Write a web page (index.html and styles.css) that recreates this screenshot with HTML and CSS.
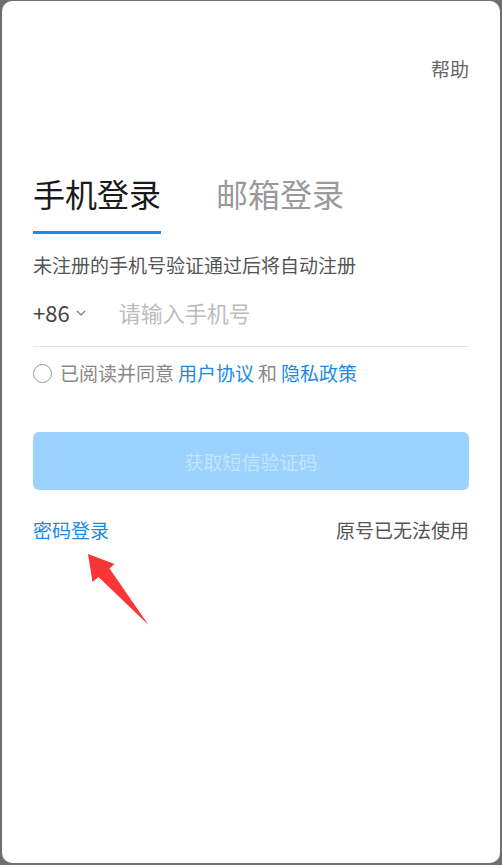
FILE: index.html
```html
<!DOCTYPE html>
<html>
<head>
    <meta charset="utf-8">
    <link rel="stylesheet" href="styles.css">
</head>
<body>
    <div class="card">
        <div class="top-bar">
            <span class="help">帮助</span>
        </div>

        <div class="tabs">
            <div class="tab active">手机登录</div>
            <div class="tab">邮箱登录</div>
        </div>

        <p class="tip">未注册的手机号验证通过后将自动注册</p>

        <div class="phone-row">
            <span class="area">+86</span>
            <svg class="chevron" width="10" height="6" viewBox="0 0 10 6">
                <path d="M1 1 L5 5 L9 1" fill="none" stroke="#777" stroke-width="1.2"/>
            </svg>
            <span class="placeholder">请输入手机号</span>
        </div>

        <div class="agree-row">
            <span class="radio"></span>
            <span>已阅读并同意</span>
            <a class="link">用户协议</a>
            <span>和</span>
            <a class="link">隐私政策</a>
        </div>

        <button class="submit">获取短信验证码</button>

        <div class="bottom-row">
            <a class="link">密码登录</a>
            <span class="lost">原号已无法使用</span>
        </div>

        <!-- annotation arrow -->
        <svg class="arrow" width="80" height="90" viewBox="80 545 80 90">
            <polygon points="88,554 114.5,564 109.5,568.5 148.5,625 98.5,577 92.5,582" fill="#fb3434"/>
        </svg>
    </div>
</body>
</html>
```

FILE: styles.css
```css
* {
    box-sizing: border-box;
}

html, body {
    height: 100%;
}

body {
    margin: 0;
    padding: 1px 2px 2px 2px;
    background-color: #6f6f6f;
    font-family: "Noto Sans CJK SC", "Noto Sans", sans-serif;
}

.card {
    position: relative;
    height: 100%;
    background: #fff;
    border-radius: 10px;
    padding: 0 31px;
}

.top-bar {
    display: flex;
    justify-content: flex-end;
    padding-top: 56px;
}

.help {
    font-size: 19px;
    line-height: 24px;
    color: #666;
}

.tabs {
    display: flex;
    gap: 55px;
    margin-top: 92px;
}

.tab {
    font-size: 32px;
    line-height: 40px;
    color: #9a9a9a;
    padding-bottom: 18px;
    border-bottom: 3px solid transparent;
}

.tab.active {
    color: #1a1a1a;
    border-bottom-color: #2188e6;
}

.tip {
    margin: 19px 0 0;
    font-size: 19px;
    line-height: 24px;
    color: #555;
}

.phone-row {
    display: flex;
    align-items: center;
    height: 58px;
    margin-top: 12px;
    padding-bottom: 12px;
    border-bottom: 1px solid #e6e6e6;
}

.area {
    font-size: 22px;
    line-height: 44px;
    color: #444;
}

.chevron {
    margin-left: 6px;
    margin-top: 2px;
}

.placeholder {
    margin-left: 33px;
    font-size: 22px;
    line-height: 44px;
    color: #bcbcbc;
}

.agree-row {
    display: flex;
    align-items: center;
    margin-top: 14px;
    font-size: 19px;
    line-height: 24px;
    color: #888;
}

.radio {
    width: 19px;
    height: 19px;
    border: 1.5px solid #999;
    border-radius: 50%;
    margin-right: 8px;
}

.agree-row .link {
    margin: 0 4px;
}

.link {
    color: #1a8ae6;
    text-decoration: none;
}

.submit {
    display: block;
    width: 100%;
    height: 58px;
    margin-top: 47px;
    border: none;
    border-radius: 6px;
    background: #9cd2fe;
    color: #c4e5fe;
    font-family: inherit;
    font-size: 19px;
}

.bottom-row {
    display: flex;
    justify-content: space-between;
    margin-top: 28px;
    font-size: 19px;
    line-height: 24px;
}

.lost {
    color: #555;
}

.arrow {
    position: absolute;
    left: 78px;
    top: 544px;
}
```
